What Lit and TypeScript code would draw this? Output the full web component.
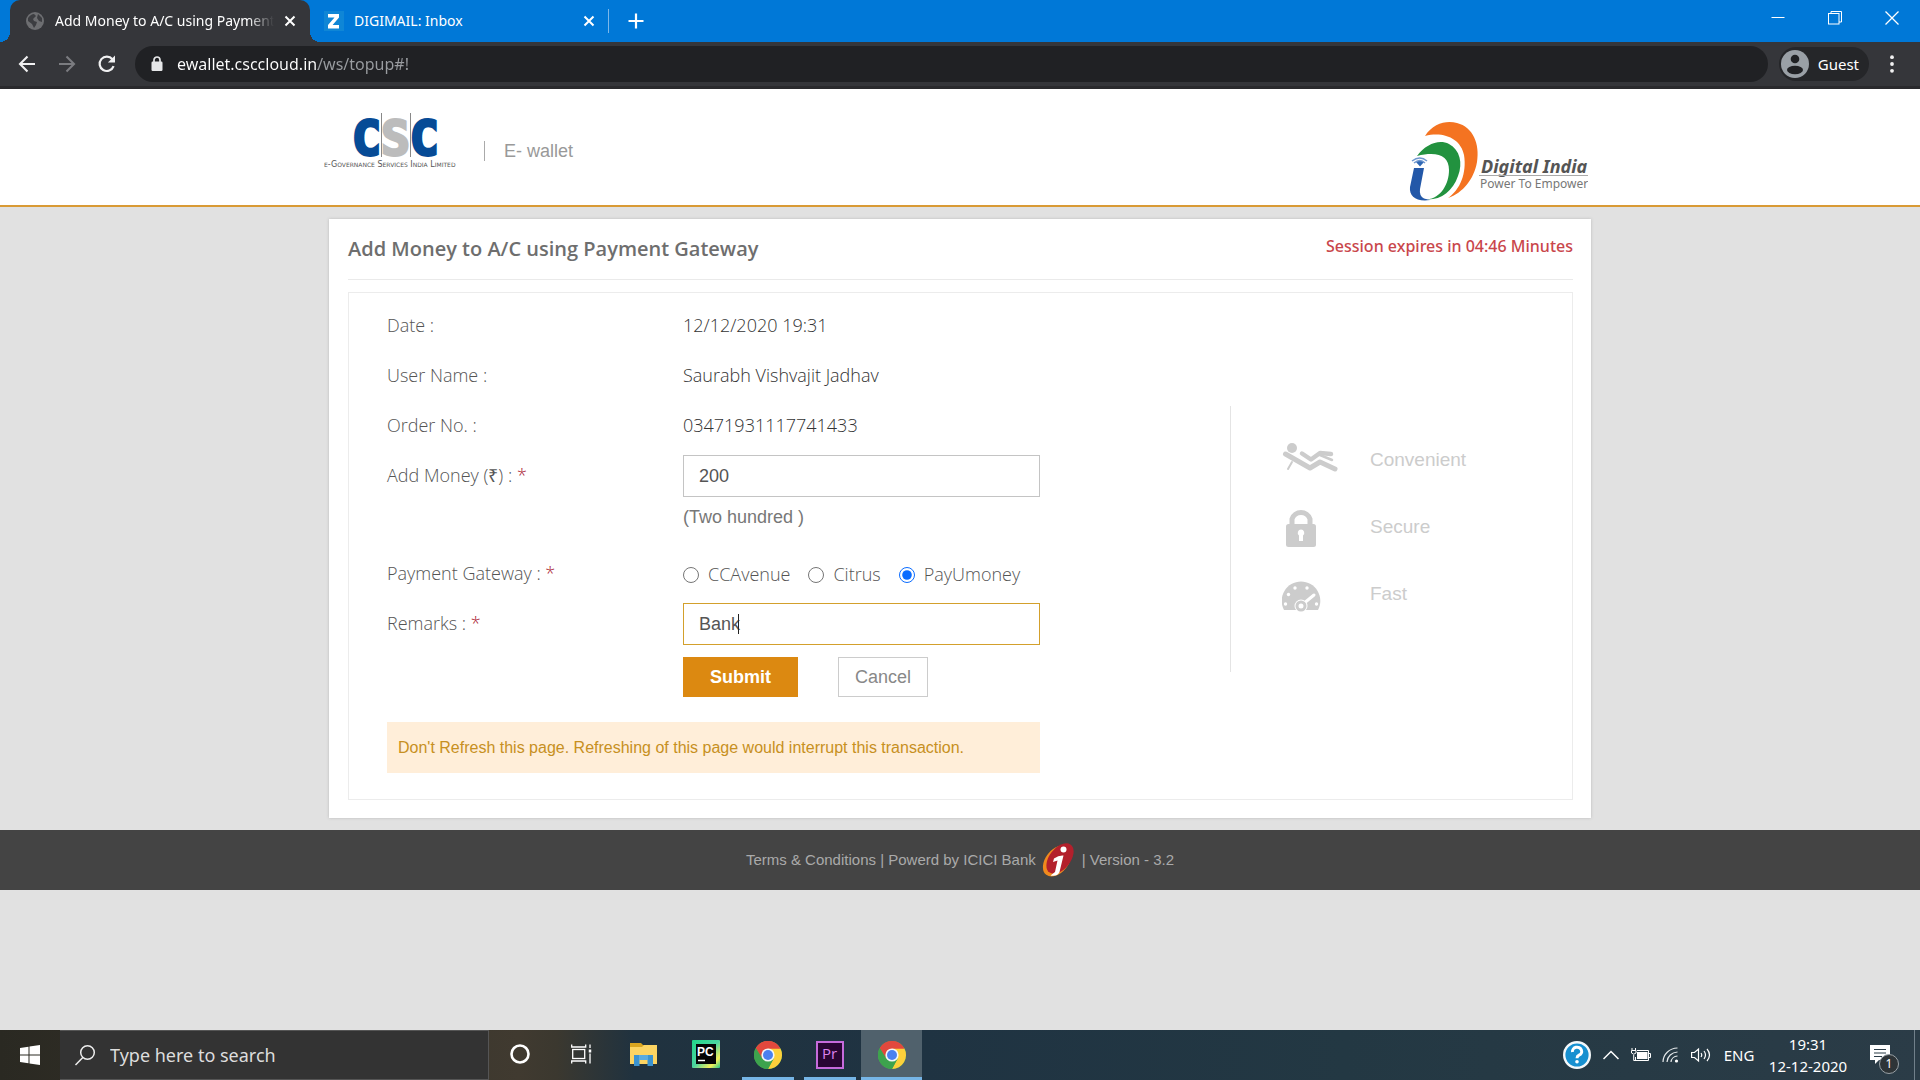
import { LitElement, html, svg, css } from "lit";
import { customElement, state } from "lit/decorators.js";
import { classMap } from "lit/directives/class-map.js";

const UI_FONT = css`"Noto Sans", "Open Sans", sans-serif`;

const chromeLogo = () => html`
  <svg width="28" height="28" viewBox="0 0 28 28" aria-hidden="true">
    <circle cx="14" cy="14" r="14" fill="#4caf50" />
    <path d="M14 14 L1.9 7 A14 14 0 0 1 26.1 7 Z" fill="#e2483d" />
    <path d="M14 7.5 H26.4 A14 14 0 0 1 14 28 L19.8 17.2 Z" fill="#fdd03b" />
    <path d="M1.9 7 L8.3 17.4 L14 20.5 L19.8 17.2 L14 28 A14 14 0 0 1 1.9 7Z" fill="#3da34d" />
    <path d="M1.9 7 A14 14 0 0 1 26.4 7.5 H14 A6.5 6.5 0 0 0 7.6 13.5 L8.2 17.2 Z" fill="#e2483d" />
    <circle cx="14" cy="14" r="6.6" fill="#f4f6f8" />
    <circle cx="14" cy="14" r="5" fill="#4a80f0" />
  </svg>`;

@customElement("browser-bar")
export class BrowserBar extends LitElement {
  static styles = css`
    :host { display: block; font-family: ${UI_FONT}; color: #fff; }
    button { border: 0; padding: 0; background: none; color: inherit; font: inherit; display: flex; align-items: center; justify-content: center; }
    svg { display: block; }
    .strip { display: flex; height: 42px; background: #0078d7; padding-left: 10px; }
    .tab { display: flex; align-items: center; width: 298px; height: 42px; padding: 0 9px 0 14px; box-sizing: border-box; }
    .tab.active { width: 300px; position: relative; background: #35363a; border-radius: 10px 10px 0 0; padding: 0 10px 0 15px; }
    .tab.active::before, .tab.active::after { content: ""; position: absolute; bottom: 0; width: 10px; height: 10px; }
    .tab.active::before { left: -10px; background: radial-gradient(circle at 0 0, transparent 10px, #35363a 10px); }
    .tab.active::after { right: -10px; background: radial-gradient(circle at 100% 0, transparent 10px, #35363a 10px); }
    .name { flex: 1; min-width: 0; margin-left: 10px; justify-content: flex-start; font-size: 14px; line-height: 20px; white-space: nowrap; overflow: hidden; }
    .active .name { margin-right: 6px; -webkit-mask-image: linear-gradient(90deg, #000 88%, transparent); mask-image: linear-gradient(90deg, #000 88%, transparent); }
    .close { width: 20px; height: 20px; }
    .divider { width: 1px; height: 24px; margin: 9px 8px 0 0; background: #7cb8ea; }
    .add { width: 38px; height: 42px; }
    .window { margin-left: auto; display: flex; }
    .window button { width: 57px; height: 36px; }
    .tools { display: flex; align-items: center; height: 44px; padding: 0 12px 0 7px; background: #35363a; border-bottom: 3px solid #2a2a2d; }
    .nav { width: 40px; height: 36px; }
    .address { flex: 1; display: flex; align-items: center; height: 36px; margin-left: 8px; padding-left: 16px; border-radius: 18px; background: #202124; }
    .address input { flex: 1; min-width: 0; margin-left: 14px; padding: 0; border: 0; outline: 0; font: 16px/24px ${UI_FONT}; color: transparent; background: linear-gradient(90deg, #fff 141px, #9a9da1 141px); -webkit-background-clip: text; background-clip: text; }
    .guest { height: 34px; margin-left: 11px; padding: 0 10px 0 2px; border-radius: 17px; background: #252629; gap: 9px; font-size: 15px; }
    .menu { width: 32px; height: 34px; margin-left: 7px; }
  `;

  private cross() {
    return html`<svg width="12" height="12" viewBox="0 0 12 12" stroke="#fff" stroke-width="2"><path d="M1.5 1.5 L10.5 10.5 M10.5 1.5 L1.5 10.5" /></svg>`;
  }

  render() {
    return html`
      <div class="strip">
        <div class="tab active">
          <svg width="20" height="20" viewBox="0 0 20 20"><circle cx="10" cy="10" r="9" fill="#6d6e71" /><path d="M3 7 Q6 3 9 3 L11 5 L8 8 L9 10 L12 11 L11 14 L9 17 L7 13 L3 10Z M13 3 L17 7 L17 11 L14 10 L12 7Z" fill="#3c3d41" /></svg>
          <button class="name">Add Money to A/C using Payment Gateway</button>
          <button class="close" aria-label="Close tab">${this.cross()}</button>
        </div>
        <div class="tab">
          <svg width="20" height="20" viewBox="0 0 20 20"><rect width="20" height="20" fill="#0f86d6" /><path d="M4 3 H15 V6.5 L8.6 14 H15 V17.5 H4 V14 L10.5 6.5 H4Z" fill="#fff" /></svg>
          <button class="name">DIGIMAIL: Inbox</button>
          <button class="close" aria-label="Close tab">${this.cross()}</button>
        </div>
        <div class="divider"></div>
        <button class="add" aria-label="New tab"><svg width="16" height="16" viewBox="0 0 16 16" stroke="#fff" stroke-width="2.2"><path d="M8 0.5 V15.5 M0.5 8 H15.5" /></svg></button>
        <div class="window">
          <button aria-label="Minimize"><svg width="14" height="14" viewBox="0 0 14 14" stroke="#fff"><path d="M0.5 6.5 H13.5" /></svg></button>
          <button aria-label="Restore"><svg width="14" height="14" viewBox="0 0 14 14" stroke="#fff" fill="none"><rect x="0.5" y="2.5" width="10.5" height="10.5" /><path d="M3 2.5 V0.5 H13.5 V11 H11" /></svg></button>
          <button aria-label="Close window"><svg width="14" height="14" viewBox="0 0 14 14" stroke="#fff" stroke-width="1.3"><path d="M0.5 0.5 L13.5 13.5 M13.5 0.5 L0.5 13.5" /></svg></button>
        </div>
      </div>
      <div class="tools">
        <button class="nav" aria-label="Back"><svg width="18" height="18" viewBox="0 0 18 18" fill="none" stroke="#f1f1f2" stroke-width="2.1"><path d="M17 9 H2 M9.5 1.5 L2 9 L9.5 16.5" /></svg></button>
        <button class="nav" aria-label="Forward"><svg width="18" height="18" viewBox="0 0 18 18" fill="none" stroke="#7b7c80" stroke-width="2.1"><path d="M1 9 H16 M8.5 1.5 L16 9 L8.5 16.5" /></svg></button>
        <button class="nav" aria-label="Reload"><svg width="20" height="20" viewBox="0 0 20 20" fill="none" stroke="#f1f1f2" stroke-width="2.2"><path d="M16.6 12.2 A7.2 7.2 0 1 1 15.4 5.2" /><path d="M18 1.5 V8.6 H10.9Z" fill="#f1f1f2" stroke="none" /></svg></button>
        <div class="address">
          <svg width="12" height="16" viewBox="0 0 12 16"><rect x="0.5" y="5.5" width="11" height="9.5" rx="1.2" fill="#e6e7e9" /><path d="M3 6 V4 A3 3 0 0 1 9 4 V6" fill="none" stroke="#e6e7e9" stroke-width="1.7" /></svg>
          <input aria-label="Address" .value=${"ewallet.csccloud.in/ws/topup#!"} />
        </div>
        <button class="guest"><svg width="28" height="28" viewBox="0 0 28 28"><circle cx="14" cy="14" r="14" fill="#9aa0a6" /><circle cx="14" cy="9" r="4.3" fill="#202124" /><ellipse cx="14" cy="20" rx="8" ry="4.2" fill="#202124" /></svg>Guest</button>
        <button class="menu" aria-label="Menu"><svg width="4" height="18" viewBox="0 0 4 18" fill="#f1f1f2"><circle cx="2" cy="2.2" r="1.9" /><circle cx="2" cy="9" r="1.9" /><circle cx="2" cy="15.8" r="1.9" /></svg></button>
      </div>`;
  }
}

@customElement("site-header")
export class SiteHeader extends LitElement {
  static styles = css`
    :host { display: block; background: #fff; border-bottom: 2px solid #d99a35; font-family: "Liberation Sans", sans-serif; }
    .inner { display: flex; justify-content: space-between; max-width: 1272px; height: 116px; margin: 0 auto; box-sizing: border-box; padding-top: 20px; }
    .brand { display: flex; align-items: flex-start; }
    .product { margin-top: 32px; margin-left: 17px; padding-left: 19px; border-left: 1px solid #aaa; font-size: 18px; line-height: 20px; color: #999; }
    .csc { font: 700 48px "DejaVu Sans Mono", monospace; }
    .tag { font: 8px "DejaVu Sans", sans-serif; font-variant: small-caps; }
    .india { margin-top: 10px; margin-right: 8px; }
    .di { font: italic 700 18px "Noto Sans", "Open Sans", sans-serif; }
    .pe { font: 12px "Noto Sans", "Open Sans", sans-serif; }
    svg { display: block; }
  `;

  render() {
    return html`
      <div class="inner">
        <div class="brand">
          <svg width="143" height="64" viewBox="0 0 143 64" role="img" aria-label="CSC e-Governance Services India Limited">
            <text class="csc" x="28" y="46" fill="#064b96" stroke="#064b96" stroke-width="3">C<tspan fill="#bcbcbc" stroke="#bcbcbc">S</tspan>C</text>
            <path d="M57.5 4 V48 M86.5 4 V48" stroke="#888" />
            <text class="tag" x="0" y="58" fill="#555">e-Governance Services India Limited</text>
          </svg>
          <div class="product">E- wallet</div>
        </div>
        <svg class="india" width="182" height="84" viewBox="0 0 182 84" role="img" aria-label="Digital India, Power To Empower">
          <path d="M19 17 C27 4 41 1 51 4 C67 8 74 25 71 43 C68 60 57 74 42 79 C54 71 61 54 58 36 C55 20 38 12 19 17Z" fill="#f47321" />
          <path d="M11 37 C20 25 33 20 43 25 C54 31 57 44 52 57 C47 72 35 81 21 80.500 C35 79 43 65 43 51 C43 37 32 32 11 37Z" fill="#22923f" />
          <path d="M8 49 H18 L14 70 Q13 77 18 79.500 L24 81 C10 83 3 77 4 68Z" fill="#2358a8" />
          <path d="M10 43 Q14 40 18 43 L14 47.500Z" fill="#2f68b4" />
          <path d="M6 42 Q14 36 21 42 M8 44 Q14 39 19 44" fill="none" stroke="#6f97cf" stroke-width="1.5" />
          <text class="di" x="75" y="54" fill="#555">Digital India</text>
          <path d="M73 56.5 H182" stroke="#aaa" />
          <text class="pe" x="74" y="69" fill="#777">Power To Empower</text>
        </svg>
      </div>`;
  }
}

@customElement("perk-list")
export class PerkList extends LitElement {
  static styles = css`
    :host { display: block; border-left: 1px solid #e4e4e4; font: 19px/24px "Liberation Sans", sans-serif; color: #ccc; }
    ul { list-style: none; margin: 0; padding: 20px 0 0 51px; }
    li { display: grid; grid-template-columns: 88px 1fr; align-items: center; height: 67px; }
    svg { display: block; }
  `;

  private icons = [
    svg`<circle cx="10" cy="13" r="5" fill="#ccc" /><g fill="none" stroke="#ccc" stroke-linecap="round" stroke-linejoin="round"><path d="M3.500 19 L28 33 L38 27 L53 34" stroke-width="5" /><path d="M20 18.500 L29 24.500 L38 18 L49 19" stroke-width="4.500" /><path d="M38 20 L50 25" stroke-width="2.500" /><path d="M10 27 L6 34" stroke-width="2" /></g>`,
    svg`<rect x="4" y="22" width="30" height="23" rx="2.500" fill="#ccc" /><path d="M10 23 V17 A9.500 9.500 0 0 1 28 17 V23" fill="none" stroke="#ccc" stroke-width="5" /><path d="M19 27.500 A3.300 3.300 0 0 1 21 33.400 V39 H17 V33.400 A3.300 3.300 0 0 1 19 27.500Z" fill="#fff" />`,
    svg`<path d="M2 41 A19.300 19.300 0 1 1 36 41Z" fill="#ccc" /><g fill="#fff"><circle cx="3.500" cy="35" r="1.700" /><circle cx="6.500" cy="25.500" r="1.700" /><circle cx="13" cy="19" r="1.700" /><circle cx="25" cy="19" r="1.700" /><circle cx="34.500" cy="35" r="1.700" /></g><path d="M21 35 L32 26" stroke="#fff" stroke-width="3" stroke-linecap="round" /><circle cx="19" cy="37" r="6.500" fill="#fff" /><circle cx="19" cy="37" r="4" fill="none" stroke="#ccc" stroke-width="3" />`,
  ];

  render() {
    return html`<ul>
      ${["Convenient", "Secure", "Fast"].map(
        (name, i) => html`<li><svg width="58" height="50" viewBox="0 0 58 50" aria-hidden="true">${this.icons[i]}</svg>${name}</li>`
      )}
    </ul>`;
  }
}

@customElement("payment-card")
export class PaymentCard extends LitElement {
  @state() private gateway = "PayUmoney";

  static styles = css`
    :host { display: block; width: 100%; max-width: 1262px; box-sizing: border-box; margin: 12px auto; padding: 0 18px 18px 19px; background: #fff; box-shadow: 0 0 3px #bbb; font-family: "Open Sans", sans-serif; }
    .head { display: flex; justify-content: space-between; align-items: flex-start; height: 60px; border-bottom: 1px solid #eaeaea; }
    h1 { margin: 16px 0 0; font-size: 20px; line-height: 28px; font-weight: 600; color: #6e6e6e; }
    .session { margin-top: 15px; font: 500 16px/24px "Noto Sans", "Open Sans", sans-serif; color: #c9464b; }
    .box { display: flex; justify-content: space-between; margin-top: 12px; padding: 12px 31px 26px 38px; border: 1px solid #ececec; }
    form { width: 653px; display: grid; gap: 8px; }
    .row { display: grid; grid-template-columns: 296px 1fr; min-height: 42px; font-size: 18px; line-height: 40px; font-weight: 300; color: #333; }
    .row .caption { color: #555; }
    .star { color: #a23; }
    .field { position: relative; }
    .field input { display: block; width: 100%; height: 42px; box-sizing: border-box; padding: 0 15px; border: 1px solid #c4c4c4; outline: 0; font: 18px "Liberation Sans", sans-serif; color: #555; }
    .field input.current { border-color: #d3a02c; }
    .caret { position: absolute; left: 55px; top: 11px; width: 1px; height: 20px; background: #222; }
    .hint { padding: 8px 0 16px; font: 18px/24px "Liberation Sans", sans-serif; color: #777; }
    .options { display: flex; align-items: center; gap: 18px; }
    .options label { display: flex; align-items: center; gap: 9px; color: #555; }
    .options input { width: 16px; height: 16px; margin: 2px 0 0; accent-color: #0a6cff; }
    .actions { display: flex; gap: 40px; margin: 4px 0 17px 296px; }
    .actions button { height: 40px; padding: 0 16px; border: 1px solid #ccc; background: #fff; font: 18px "Liberation Sans", sans-serif; color: #888; }
    .actions .submit { padding: 0 26px; border-color: #dc8911; background: #dc8911; font-weight: 700; color: #fff; }
    .notice { padding: 14px 11px 13px; background: #ffeed9; font: 16px/24px "Liberation Sans", sans-serif; color: #c79022; }
    perk-list { width: 310px; height: 266px; margin-top: 101px; }
  `;

  private facts = [
    ["Date :", "12/12/2020 19:31"],
    ["User Name :", "Saurabh Vishvajit Jadhav"],
    ["Order No. :", "03471931117741433"],
  ];

  render() {
    return html`
      <div class="head">
        <h1>Add Money to A/C using Payment Gateway</h1>
        <div class="session">Session expires in 04:46 Minutes</div>
      </div>
      <div class="box">
        <form @submit=${(e: Event) => e.preventDefault()}>
          ${this.facts.map(([k, v]) => html`<div class="row"><span class="caption">${k}</span><span>${v}</span></div>`)}
          <div class="row">
            <label class="caption" for="amount">Add Money (₹) : <span class="star">*</span></label>
            <div><div class="field"><input id="amount" .value=${"200"} /></div><div class="hint">(Two hundred )</div></div>
          </div>
          <div class="row">
            <span class="caption" id="gateway">Payment Gateway : <span class="star">*</span></span>
            <div class="options" role="radiogroup" aria-labelledby="gateway">
              ${["CCAvenue", "Citrus", "PayUmoney"].map(
                (g) => html`<label><input type="radio" name="gateway" .checked=${g === this.gateway} @change=${() => (this.gateway = g)} />${g}</label>`
              )}
            </div>
          </div>
          <div class="row">
            <label class="caption" for="remarks">Remarks : <span class="star">*</span></label>
            <div class="field"><input class="current" id="remarks" .value=${"Bank"} /><span class="caret"></span></div>
          </div>
          <div class="actions"><button class="submit">Submit</button><button type="button">Cancel</button></div>
          <div class="notice">Don't Refresh this page. Refreshing of this page would interrupt this transaction.</div>
        </form>
        <perk-list></perk-list>
      </div>`;
  }
}

@customElement("site-footer")
export class SiteFooter extends LitElement {
  static styles = css`
    :host { display: flex; align-items: center; justify-content: center; gap: 6px; height: 60px; background: #444; font: 15px/24px "Liberation Sans", sans-serif; color: #aaa; }
    a { color: inherit; text-decoration: none; }
    svg { display: block; }
  `;

  render() {
    return html`
      <span><a href="#terms">Terms &amp; Conditions</a> | Powerd by ICICI Bank</span>
      <svg width="34" height="36" viewBox="0 0 34 36" role="img" aria-label="ICICI Bank">
        <ellipse cx="15" cy="19" rx="17.500" ry="11.500" transform="rotate(-52 15 19)" fill="#f08a1d" />
        <ellipse cx="18" cy="16.500" rx="17.500" ry="10.500" transform="rotate(-52 18 16.500)" fill="#b3202c" />
        <circle cx="21.500" cy="7.500" r="3" fill="#fff" />
        <path d="M12 16.500 Q17 13 21.500 13.500 L17.500 30 Q15 35 8.500 33.500 L13 30 L15.500 18.500 L11 20Z" fill="#fff" />
      </svg>
      <span>| Version - 3.2</span>`;
  }
}

@customElement("task-bar")
export class TaskBar extends LitElement {
  static styles = css`
    :host { display: flex; height: 50px; background: linear-gradient(90deg, #2a2922 0, #403a30 27%, #3b382f 29%, #20323f 33%, #1f3342 48%, #233843 70%, #2b3c47 100%); font-family: ${UI_FONT}; color: #fff; }
    button { border: 0; padding: 0; background: none; color: inherit; font: inherit; display: flex; align-items: center; justify-content: center; }
    svg { display: block; }
    .start { width: 60px; }
    .search { display: flex; align-items: center; width: 429px; padding-left: 14px; background: #333; border: solid #555; border-width: 1px 1px 1px 0; box-sizing: border-box; }
    .search input { flex: 1; min-width: 0; margin-left: 14px; padding: 0; border: 0; outline: 0; background: none; font: 18px/24px ${UI_FONT}; color: #fff; }
    .search input::placeholder { color: #ddd; }
    .app { width: 62px; border-bottom: 3px solid transparent; box-sizing: border-box; }
    .app.open { width: 52px; margin: 0 5px; border-bottom-color: #76b5e6; padding-top: 3px; }
    .app.current { width: 61px; margin: 0; background: #50616c; }
    .tray { margin-left: auto; display: flex; align-items: center; font-size: 15px; line-height: 22px; }
    .tray button { height: 50px; }
    .help { width: 38px; }
    .slot { width: 30px; }
    .lang { width: 46px; }
    .clock { width: 92px; flex-direction: column; }
    .notes { width: 58px; padding-right: 6px; box-sizing: border-box; position: relative; }
    .badge { position: absolute; left: 25px; top: 24px; width: 18px; height: 18px; border: 1px solid #99a1a6; border-radius: 50%; background: #2e3437; font-size: 12px; line-height: 18px; text-align: center; }
    .edge { width: 6px; height: 50px; border-left: 1px solid #71808a; box-sizing: border-box; margin-left: 2px; }
  `;

  private pycharm = html`<svg width="28" height="28" viewBox="0 0 28 28"><defs><linearGradient id="pc" x1="0" y1="0" x2="1" y2="1"><stop offset="0" stop-color="#20d789" /><stop offset=".5" stop-color="#4bd5a0" /><stop offset=".8" stop-color="#f5f05a" /><stop offset="1" stop-color="#22c98b" /></linearGradient></defs><rect width="28" height="28" rx="1" fill="url(#pc)" /><rect x="4" y="4" width="20" height="20" fill="#050505" /><text x="5" y="16" font-size="12" font-weight="700" fill="#fff" font-family="Liberation Sans">PC</text><path d="M6 20.500 H13" stroke="#fff" stroke-width="1.500" /></svg>`;

  private premiere = html`<svg width="28" height="28" viewBox="0 0 28 28"><rect x="1" y="1" width="26" height="26" fill="#2a0634" stroke="#c76bdc" stroke-width="2" /><text x="6" y="18" font-size="15" font-weight="500" fill="#dc82ee" font-family="Open Sans">Pr</text></svg>`;

  private apps = [
    { name: "Cortana", icon: html`<svg width="22" height="22" viewBox="0 0 22 22"><circle cx="11" cy="11" r="8.500" fill="none" stroke="#fff" stroke-width="2.600" /></svg>` },
    { name: "Task view", icon: html`<svg width="22" height="20" viewBox="0 0 22 20" fill="none" stroke="#fff" stroke-width="1.300"><rect x="1.700" y="5.500" width="12" height="9" /><path d="M0.700 0.500 V3 H14.700 V0.500 M0.700 19.500 V17 H14.700 V19.500 M19 0.500 V4 M19 9.500 V19.500" /><path d="M19 5.500 V8.500" stroke-width="2.500" /></svg>` },
    { name: "File Explorer", icon: html`<svg width="28" height="24" viewBox="0 0 28 24"><path d="M0 1 H11 L13 3 H27 V22 H0Z" fill="#d9a520" /><path d="M0 5 H12 L14 3 H27 V22 H0Z" fill="#fcd462" /><path d="M4 24 V13 H23 V24 H17.500 V18 H9.500 V24Z" fill="#3b93d0" /><path d="M9 13 H18 V18 H9Z" fill="#5aabe0" /></svg>` },
    { name: "PyCharm", icon: this.pycharm },
    { name: "Chrome", icon: chromeLogo(), open: true },
    { name: "Premiere Pro", icon: this.premiere, open: true },
    { name: "Chrome window", icon: chromeLogo(), open: true, current: true },
  ];

  render() {
    return html`
      <button class="start" aria-label="Start"><svg width="20" height="20" viewBox="0 0 20 20" fill="#fff"><path d="M0 3 L8.500 1.700 V9.500 H0Z M9.500 1.500 L20 0 V9.500 H9.500Z M0 10.500 H8.500 V18.300 L0 17Z M9.500 10.500 H20 V20 L9.500 18.500Z" /></svg></button>
      <label class="search">
        <svg width="22" height="22" viewBox="0 0 22 22" fill="none" stroke="#eee" stroke-width="1.500"><circle cx="13.500" cy="8.500" r="6.800" /><path d="M8.800 13.500 L1.500 21" /></svg>
        <input aria-label="Search" placeholder="Type here to search" />
      </label>
      ${this.apps.map(
        (a) => html`<button class=${classMap({ app: true, open: !!a.open, current: !!a.current })} aria-label=${a.name}>${a.icon}</button>`
      )}
      <div class="tray">
        <button class="help" aria-label="Help"><svg width="28" height="28" viewBox="0 0 28 28"><circle cx="14" cy="14" r="12.800" fill="#1790d0" stroke="#f4f8fa" stroke-width="2.400" /><path d="M9.500 11 A4.600 4.200 0 1 1 16 14.200 Q14 15.200 14 17.200" fill="none" stroke="#fff" stroke-width="3" /><circle cx="14" cy="20.800" r="1.800" fill="#fff" /></svg></button>
        <button class="slot" aria-label="Show hidden icons"><svg width="16" height="10" viewBox="0 0 16 10" fill="none" stroke="#fff" stroke-width="1.500"><path d="M0.500 9 L8 1.500 L15.500 9" /></svg></button>
        <button class="slot" aria-label="Battery"><svg width="20" height="14" viewBox="0 0 20 14" fill="none" stroke="#fff"><path d="M6 2.500 H17.500 V12.500 H4.500 V9 M18 5.500 H19.500 V9.500 H18 M1 0 V2 M4.500 0 V2 M0.500 2.500 H5 V5 Q2.700 7.500 0.500 5Z M2.700 7 V12.500 H5" /><rect x="6" y="4" width="10.500" height="7" fill="#fff" stroke="none" /></svg></button>
        <button class="slot" aria-label="Network"><svg width="18" height="16" viewBox="0 0 18 16" fill="none" stroke="#e6eaec" stroke-width="1.200"><path d="M1 15 A15 14 0 0 1 15.500 1 M5 15 A11 10.500 0 0 1 15.500 5 M9 15 A7 6.500 0 0 1 15.500 9" /><circle cx="14.500" cy="14" r="1.600" fill="#fff" stroke="none" /></svg></button>
        <button class="slot" aria-label="Volume"><svg width="20" height="16" viewBox="0 0 20 16" fill="none" stroke="#fff" stroke-width="1.200"><path d="M0.600 5.500 H3.500 L7.500 2 V14 L3.500 10.500 H0.600Z M10 6 Q11.500 8 10 10 M13 4 Q16 8 13 12 M16 2 Q21 8 16 14" /></svg></button>
        <button class="lang">ENG</button>
        <button class="clock"><span>19:31</span><span>12-12-2020</span></button>
        <button class="notes" aria-label="Notifications"><svg width="20" height="20" viewBox="0 0 20 20"><path d="M0 0 H20 V15 H9 L5 19 V15 H0Z" fill="#fff" /><path d="M4 4.500 H16 M4 8 H16 M4 11.500 H12" stroke="#2b3c47" stroke-width="1.200" /></svg><span class="badge">1</span></button>
        <div class="edge"></div>
      </div>`;
  }
}

@customElement("app-root")
export class AppRoot extends LitElement {
  static styles = css`
    :host { display: flex; flex-direction: column; min-height: 100vh; background: #e1e1e1; }
    main { display: block; }
    task-bar { margin-top: auto; }
  `;

  render() {
    return html`
      <browser-bar></browser-bar>
      <site-header></site-header>
      <main><payment-card></payment-card></main>
      <site-footer></site-footer>
      <task-bar></task-bar>`;
  }
}
